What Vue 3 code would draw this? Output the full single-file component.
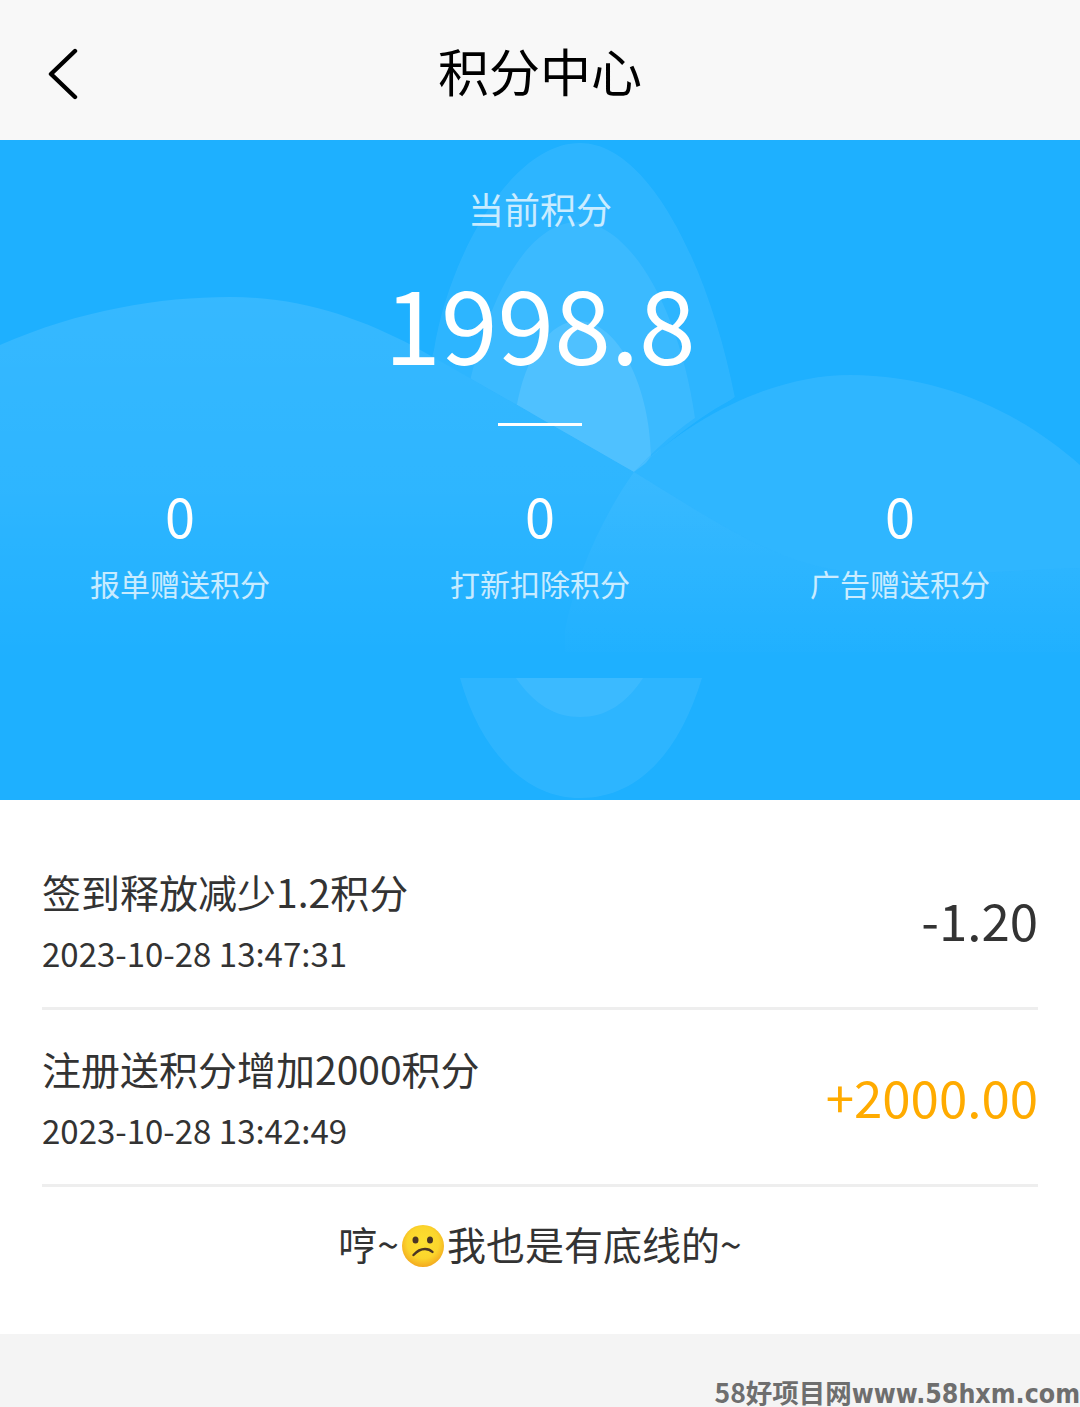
<template>
  <div class="page">
    <header class="nav">
      <svg class="back" viewBox="0 0 34 52" width="34" height="52">
        <path d="M28 3 L4 26 L28 49" fill="none" stroke="#000" stroke-width="4.4" stroke-linecap="round" stroke-linejoin="round" />
      </svg>
      <h1 class="nav-title">积分中心</h1>
    </header>

    <section class="hero">
      <svg class="hero-bg" viewBox="0 0 1080 660" width="1080" height="660">
        <defs>
          <linearGradient id="fade" gradientUnits="userSpaceOnUse" x1="0" y1="150" x2="0" y2="520">
            <stop offset="0" stop-color="#fff" stop-opacity="0.11" />
            <stop offset="0.55" stop-color="#fff" stop-opacity="0.07" />
            <stop offset="1" stop-color="#fff" stop-opacity="0" />
          </linearGradient>
          <linearGradient id="fade-low" gradientUnits="userSpaceOnUse" x1="0" y1="330" x2="0" y2="515">
            <stop offset="0" stop-color="#fff" stop-opacity="0.05" />
            <stop offset="1" stop-color="#fff" stop-opacity="0.006" />
          </linearGradient>
          <clipPath id="above-wave">
            <path d="M0 0 L0 205 C80 170 160 157 230 157 C300 157 360 178 413 206 C450 226 560 290 634 332 L1080 0Z" />
          </clipPath>
        </defs>
        <g clip-path="url(#above-wave)">
          <path d="M434 210 C448 120 510 3 580 3 C650 3 710 130 735 258 C700 275 665 305 634 332 L600 340 L420 260Z" fill="#fff" fill-opacity="0.07" />
          <path d="M468 250 C490 150 530 82 578 82 C630 82 680 170 695 278 C670 295 650 315 634 332 L600 340 L460 270Z" fill="#fff" fill-opacity="0.07" />
          <path d="M516 270 C525 215 550 181 578 181 C620 181 650 250 651 316 L634 340 L510 280Z" fill="#fff" fill-opacity="0.1" />
        </g>
        <path d="M0 205 C80 170 160 157 230 157 C300 157 360 178 413 206 C450 226 560 290 634 332 C720 385 780 425 850 432 C930 440 1000 430 1080 428 L1080 520 L0 520Z" fill="url(#fade)" />
        <path d="M634 332 C700 270 780 235 850 235 C950 235 1030 280 1080 325 L1080 428 C1000 430 930 440 850 432 C780 425 720 385 634 332Z" fill="#fff" fill-opacity="0.08" />
        <path d="M634 332 C600 380 575 440 565 490 L565 512 L1080 512 L1080 428 C1000 430 930 440 850 432 C780 425 720 385 634 332Z" fill="url(#fade-low)" />
        <path d="M460 538 L702 538 C680 610 640 658 580 658 C525 658 480 610 460 538Z" fill="#fff" fill-opacity="0.07" />
        <path d="M516 538 L643 538 C625 565 605 577 580 577 C555 577 535 565 516 538Z" fill="#fff" fill-opacity="0.07" />
      </svg>

      <div class="hero-body">
        <div class="hero-label">当前积分</div>
        <div class="hero-value">1998.8</div>
        <div class="hero-line"></div>
        <div class="stats">
          <div v-for="s in stats" :key="s" class="stat">
            <div class="stat-num">0</div>
            <div class="stat-label">{{ s }}</div>
          </div>
        </div>
      </div>
    </section>

    <section class="list">
      <div v-for="r in records" :key="r.time" class="row">
        <div class="row-left">
          <div class="row-title">{{ r.title }}</div>
          <div class="row-time">{{ r.time }}</div>
        </div>
        <div class="row-amount" :class="{ plus: r.plus }">{{ r.amount }}</div>
      </div>
      <div class="end-tip">
        <span>哼~</span>
        <svg class="emoji" viewBox="0 0 44 44" width="44" height="44">
          <defs>
            <radialGradient id="face" cx="0.5" cy="0.42" r="0.58">
              <stop offset="0" stop-color="#fde030" />
              <stop offset="0.65" stop-color="#fbd52c" />
              <stop offset="1" stop-color="#f3a91f" />
            </radialGradient>
          </defs>
          <circle cx="22" cy="22" r="21" fill="url(#face)" />
          <ellipse cx="14.5" cy="16" rx="3" ry="3.5" fill="#4a3524" />
          <ellipse cx="29" cy="16" rx="3" ry="3.5" fill="#4a3524" />
          <path d="M12.5 31 C16 27 20.5 25 24 25 C27 25 29.5 26 31.5 28" fill="none" stroke="#4a3524" stroke-width="2.4" stroke-linecap="round" />
        </svg>
        <span>我也是有底线的~</span>
      </div>
    </section>

    <div class="bottom"></div>
    <div class="watermark"><span class="wm-cn">58好项目网</span><span class="wm-en">www.58hxm.com</span></div>
  </div>
</template>

<script setup>
const stats = ['报单赠送积分', '打新扣除积分', '广告赠送积分']

const records = [
  { title: '签到释放减少1.2积分', time: '2023-10-28 13:47:31', amount: '-1.20', plus: false },
  { title: '注册送积分增加2000积分', time: '2023-10-28 13:42:49', amount: '+2000.00', plus: true }
]
</script>

<style>
html, body {
  margin: 0;
  background: #f4f4f4;
}
</style>

<style scoped>
.page {
  position: relative;
  width: 1080px;
  height: 1407px;
  overflow: hidden;
  font-family: "Noto Sans CJK SC", "Noto Sans", sans-serif;
  background: #f4f4f4;
}

.nav {
  position: relative;
  height: 140px;
  background: #f8f8f8;
  display: flex;
  align-items: center;
  justify-content: center;
}

.back {
  position: absolute;
  left: 47px;
  top: 48px;
}

.nav-title {
  margin: 0;
  font-size: 51px;
  font-weight: 400;
  color: #000;
  line-height: 1;
}

.hero {
  position: relative;
  height: 660px;
  background: #1eb0ff;
  color: #fff;
}

.hero-bg {
  position: absolute;
  left: 0;
  top: 0;
}

.hero-body {
  position: relative;
  display: flex;
  flex-direction: column;
  align-items: center;
  padding-top: 47px;
}

.hero-label {
  font-size: 36px;
  line-height: 42px;
  opacity: 0.75;
}

.hero-value {
  margin-top: 37px;
  font-size: 102px;
  line-height: 110px;
  font-weight: 400;
}

.hero-line {
  margin-top: 47px;
  width: 84px;
  height: 3px;
  background: #fff;
}

.stats {
  margin-top: 49px;
  width: 100%;
  display: grid;
  grid-template-columns: repeat(3, 360px);
  text-align: center;
}

.stat-num {
  font-size: 54px;
  line-height: 80px;
}

.stat-label {
  margin-top: 8px;
  font-size: 30px;
  line-height: 40px;
  opacity: 0.75;
}

.list {
  background: #fff;
  padding: 0 42px;
  height: 534px;
  box-sizing: border-box;
}

.row {
  height: 177px;
  box-sizing: border-box;
  border-bottom: 3px solid #eeeeee;
  display: flex;
  align-items: center;
  justify-content: space-between;
  color: #333;
}

.list .row:first-child {
  height: 210px;
  padding-top: 33px;
}

.row-left {
  padding-top: 2px;
}

.row-title {
  font-size: 39px;
  line-height: 50px;
}

.row-time {
  margin-top: 14px;
  font-size: 33px;
  line-height: 46px;
}

.row-amount {
  font-size: 51px;
  line-height: 58px;
  margin-bottom: 2px;
}

.row-amount.plus {
  color: #ffab00;
}

.end-tip {
  height: 112px;
  display: flex;
  align-items: center;
  justify-content: center;
  font-size: 39px;
  color: #333;
}

.emoji {
  margin: 0 2px;
  position: relative;
  top: 3px;
}

.bottom {
  height: 73px;
}

.watermark {
  position: absolute;
  right: 0;
  bottom: 0;
  display: flex;
  align-items: baseline;
  line-height: 26px;
  color: #6e6e6e;
  font-weight: 700;
  white-space: nowrap;
}

.wm-cn {
  font-size: 26.5px;
}

.wm-en {
  font-family: "DejaVu Sans", sans-serif;
  font-stretch: condensed;
  font-size: 26.5px;
}
</style>
